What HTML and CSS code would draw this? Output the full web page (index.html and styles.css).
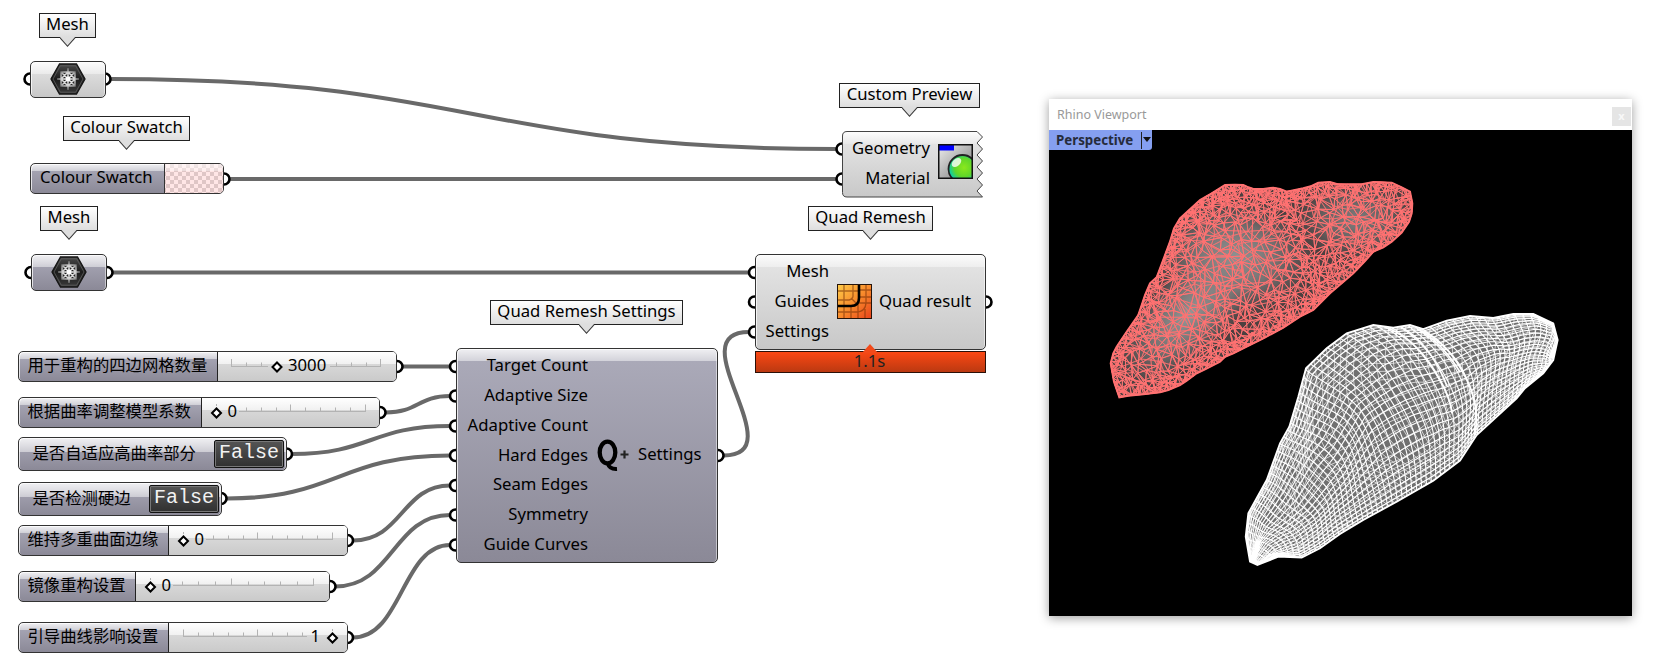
FILE: index.html
```html
<!DOCTYPE html>
<html lang="zh-CN">
<head>
<meta charset="utf-8">
<title>Quad Remesh</title>
<link rel="stylesheet" href="styles.css">
</head>
<body>
<svg class="defs" width="0" height="0" aria-hidden="true">
  <defs>
    <linearGradient id="hexFill" x1="0" y1="0" x2="0" y2="1"><stop offset="0" stop-color="#4a4a4a"/><stop offset=".5" stop-color="#1c1c1c"/><stop offset="1" stop-color="#3a3a3a"/></linearGradient>
    <radialGradient id="hexGlow" gradientUnits="userSpaceOnUse" cx="18" cy="16" r="13"><stop offset="0" stop-color="#fff"/><stop offset=".5" stop-color="#d0d0d0"/><stop offset="1" stop-color="#3c3c3c"/></radialGradient>
    <symbol id="meshIcon" viewBox="0 0 36 32">
      <path d="M9.500 1H26.500L35 16L26.500 31H9.500L1 16Z" fill="url(#hexFill)" stroke="#151515" stroke-width="1.300"/>
      <path d="M10.300 2.800H25.700L33 16L25.700 29.200H10.300L3 16Z" fill="none" stroke="#666" stroke-width=".7"/>
      <path d="M18 5V27M7 16H29M11 9L25 23M25 9L11 23M11 9H25V23H11ZM18 9L25 16L18 23L11 16Z" fill="none" stroke="url(#hexGlow)" stroke-width="1.500"/>
      <circle cx="18" cy="16" r="2.400" fill="#fff"/>
    </symbol>
  </defs>
</svg>
<main class="canvas">
  <svg class="wires" width="1040" height="669" viewBox="0 0 1040 669">
    <g class="wire">
      <path d="M111 79C473 79 473 149 836 149"/>
      <path d="M230 179H836"/>
      <path d="M113 272.500H749"/>
      <path d="M403 366.500H450"/>
      <path d="M386 412.500C418 412.500 418 396 450 396"/>
      <path d="M292 454C371 454 371 426 450 426"/>
      <path d="M227 498.500C338 498.500 338 455.500 450 455.500"/>
      <path d="M353 540.500C402 540.500 402 485.500 450 485.500"/>
      <path d="M335 586.500C393 586.500 393 515 450 515"/>
      <path d="M353 637.500C402 637.500 402 545 450 545"/>
      <path d="M724 455.500C795 455.500 677 332 749 332"/>
    </g>
    <g class="port">
      <circle cx="30" cy="79" r="5.500"/><circle cx="105" cy="79" r="5.500"/><circle cx="224" cy="179" r="5.500"/>
      <circle cx="31" cy="272.500" r="5.500"/><circle cx="107" cy="272.500" r="5.500"/>
      <circle cx="842" cy="149" r="5.500"/><circle cx="842" cy="179" r="5.500"/>
      <circle cx="754.500" cy="272.500" r="5.500"/><circle cx="754.500" cy="302" r="5.500"/><circle cx="754.500" cy="332" r="5.500"/><circle cx="986" cy="302" r="5.500"/>
      <circle cx="397" cy="366.500" r="5.500"/><circle cx="380" cy="412.500" r="5.500"/><circle cx="286.500" cy="454" r="5.500"/><circle cx="221" cy="498.500" r="5.500"/>
      <circle cx="347.500" cy="540.500" r="5.500"/><circle cx="330" cy="586.500" r="5.500"/><circle cx="347.500" cy="637.500" r="5.500"/>
      <circle cx="455.500" cy="366.500" r="5.500"/><circle cx="455.500" cy="396" r="5.500"/><circle cx="455.500" cy="426" r="5.500"/><circle cx="455.500" cy="455.500" r="5.500"/>
      <circle cx="455.500" cy="485.500" r="5.500"/><circle cx="455.500" cy="515" r="5.500"/><circle cx="455.500" cy="545" r="5.500"/><circle cx="718" cy="455.500" r="5.500"/>
    </g>
  </svg>

  <div class="balloon b-mesh1">Mesh</div>
  <div class="balloon b-swatch">Colour Swatch</div>
  <div class="balloon b-mesh2">Mesh</div>
  <div class="balloon b-preview">Custom Preview</div>
  <div class="balloon b-remesh">Quad Remesh</div>
  <div class="balloon b-settings">Quad Remesh Settings</div>

  <div class="node light n-mesh1"><svg width="36" height="32"><use href="#meshIcon"/></svg></div>
  <div class="node n-mesh2"><svg width="36" height="32"><use href="#meshIcon"/></svg></div>
  <div class="node n-swatch"><span class="swatch-name">Colour Swatch</span><span class="swatch-color"></span></div>

  <section class="n-preview">
    <svg class="torn" width="142" height="68" viewBox="0 0 142 68">
      <defs><linearGradient id="torn" x1="0" y1="0" x2="0" y2="1"><stop offset="0" stop-color="#fdfdfd"/><stop offset=".18" stop-color="#eaeaea"/><stop offset=".2" stop-color="#e2e2e2"/><stop offset="1" stop-color="#c8c8c8"/></linearGradient></defs>
      <path d="M5 .5H135L140.500 6L135 12L140.500 18L135 24L140.500 30L135 36L140.500 42L135 48L140.500 54L135 60L140.500 66H5Q.5 66 .5 61.500V5Q.5 .5 5 .5Z" fill="url(#torn)" stroke="#444"/>
    </svg>
    <div class="torn-body">
      <div class="params"><span>Geometry</span><span>Material</span></div>
      <svg width="35" height="35" viewBox="0 0 35 35">
        <defs>
          <linearGradient id="pvBg" x1="0" y1="0" x2="1" y2="1"><stop offset="0" stop-color="#eee"/><stop offset="1" stop-color="#777"/></linearGradient>
          <radialGradient id="ball" cx=".55" cy=".45" r=".6"><stop offset="0" stop-color="#8be81c"/><stop offset=".55" stop-color="#5fd62a"/><stop offset=".85" stop-color="#16cf9a"/><stop offset="1" stop-color="#1ab0d0"/></radialGradient>
          <clipPath id="pvClip"><rect x="1" y="1" width="33" height="33"/></clipPath>
        </defs>
        <rect x=".5" y=".5" width="34" height="34" fill="url(#pvBg)" stroke="#111"/>
        <rect x="1" y="1" width="15" height="5.500" fill="#00f"/>
        <g clip-path="url(#pvClip)"><circle cx="24.500" cy="25" r="14" fill="url(#ball)" stroke="#222" stroke-width="1.800"/><ellipse cx="18.500" cy="18.500" rx="5.500" ry="3.500" fill="#fff" opacity=".8" transform="rotate(-40 18.500 18.500)"/></g>
        <rect x=".75" y=".75" width="33.500" height="33.500" fill="none" stroke="#111" stroke-width="1.500"/>
      </svg>
    </div>
  </section>

  <section class="node light n-remesh">
    <div class="params"><span>Mesh</span><span>Guides</span><span>Settings</span></div>
    <svg width="35" height="35" viewBox="0 0 35 35">
      <defs><linearGradient id="rmBg" x1="0" y1="0" x2="1" y2="1"><stop offset="0" stop-color="#ffcf4a"/><stop offset=".5" stop-color="#f88b2c"/><stop offset="1" stop-color="#e8401a"/></linearGradient></defs>
      <rect width="35" height="35" fill="url(#rmBg)"/>
      <path d="M7 1V34M16 1V12Q16 15 12 16H1M1 7H23M29 1V18Q29 28 19 28H1M14 14L20 20M23 6H34M23 13H34M21 19H34M14 22V34M21 20V34M28 25V34" fill="none" stroke="#7a3206" stroke-width="1.300" opacity=".6"/>
      <path d="M22 0V14Q22 22 14 22H0" fill="none" stroke="#000" stroke-width="2.600"/>
      <rect x=".5" y=".5" width="34" height="34" fill="none" stroke="#26140a"/>
    </svg>
    <span class="out">Quad result</span>
  </section>
  <div class="timing">1.1s</div>

  <section class="node n-settings">
    <div class="params"><span>Target Count</span><span>Adaptive Size</span><span>Adaptive Count</span><span>Hard Edges</span><span>Seam Edges</span><span>Symmetry</span><span>Guide Curves</span></div>
    <svg width="33" height="34" viewBox="0 0 33 34">
      <ellipse cx="10.500" cy="13.500" rx="7.800" ry="10.800" fill="none" stroke="#000" stroke-width="4.300"/>
      <path d="M10.500 24Q12.500 30.500 20 30" fill="none" stroke="#000" stroke-width="4"/>
      <path d="M27.500 11.500V19.500M23.500 15.500H31.500" stroke="#222" stroke-width="2.200"/>
    </svg>
    <span class="out">Settings</span>
  </section>

  <div class="node slider s1"><span class="name">用于重构的四边网格数量</span>
    <svg width="178" height="29"><path class="track" d="M13.500 15V7M28.500 15V10.500M43.500 15V10.500M118.500 15V10.500M133.500 15V10.500M148.500 15V10.500M162.500 15V7M13 14.500H50M112 14.500H163"/><path class="grip" d="M59 10.500L63.500 15L59 19.500L54.500 15Z"/><text x="70" y="19">3000</text></svg></div>
  <div class="node slider s2"><span class="name">根据曲率调整模型系数</span>
    <svg width="177" height="29"><path class="track" d="M14.500 8V6M44.500 14V9.500M59.500 14V9.500M74.500 14V9.500M88.500 14V6.500M103.500 14V9.500M118.500 14V9.500M133.500 14V9.500M148.500 14V9.500M163.500 14V6.500M37 13.500H164"/><path class="grip" d="M14.500 10.500L19 15L14.500 19.500L10 15Z"/><text x="25.500" y="19">0</text></svg></div>
  <div class="node toggle t1"><span>是否自适应高曲率部分</span><b>False</b></div>
  <div class="node toggle t2"><span>是否检测硬边</span><b>False</b></div>
  <div class="node slider s3"><span class="name">维持多重曲面边缘</span>
    <svg width="178" height="29"><path class="track" d="M14.500 8V6M44.500 14V9.500M59.500 14V9.500M74.500 14V9.500M88.500 14V6.500M103.500 14V9.500M118.500 14V9.500M133.500 14V9.500M148.500 14V9.500M163.500 14V6.500M37 13.500H164"/><path class="grip" d="M14.500 10.500L19 15L14.500 19.500L10 15Z"/><text x="25.500" y="19">0</text></svg></div>
  <div class="node slider s4"><span class="name">镜像重构设置</span>
    <svg width="193" height="29"><path class="track" d="M14.500 8V6M46.500 14V9.500M62.500 14V9.500M79.500 14V9.500M95.500 14V6.500M112.500 14V9.500M128.500 14V9.500M144.500 14V9.500M161.500 14V9.500M177.500 14V6.500M37 13.500H178"/><path class="grip" d="M14.500 10.500L19 15L14.500 19.500L10 15Z"/><text x="25.500" y="19">0</text></svg></div>
  <div class="node slider s5"><span class="name">引导曲线影响设置</span>
    <svg width="178" height="29"><path class="track" d="M14.500 14V6.500M29.500 14V9.500M44.500 14V9.500M59.500 14V9.500M74.500 14V9.500M88.500 14V6.500M103.500 14V9.500M118.500 14V9.500M133.500 14V9.500M163.500 8V6M14 13.500H138"/><path class="grip" d="M163.500 10.500L168 15L163.500 19.500L159 15Z"/><text x="141.500" y="19">1</text></svg></div>
</main>

<section class="viewport">
  <header class="titlebar"><span>Rhino Viewport</span><span class="close">x</span></header>
  <div class="scene">
    <div class="view-tab"><span>Perspective</span><i></i></div>
    <svg class="model" width="583" height="486" viewBox="1049 130 583 486">
      <defs>
        <radialGradient id="s1"><stop offset="0" stop-color="#999c9c" stop-opacity=".95"/><stop offset=".5" stop-color="#8a8888" stop-opacity=".7"/><stop offset="1" stop-color="#777" stop-opacity="0"/></radialGradient>
        <clipPath id="clipA"><path id="outA"/></clipPath>
        <clipPath id="clipB"><path id="outB"/></clipPath>
      </defs>
      <g clip-path="url(#clipA)">
        <rect x="1100" y="170" width="330" height="240" fill="#4c4040"/>
        <ellipse cx="1235" cy="258" rx="80" ry="58" fill="url(#s1)"/>
        <ellipse cx="1188" cy="315" rx="90" ry="42" fill="url(#s1)" transform="rotate(-45 1188 315)"/>
        <ellipse cx="1355" cy="220" rx="60" ry="38" fill="url(#s1)" opacity=".7"/>
      </g>
      <g class="red"><path id="redBack"/><path id="redFront"/><path id="redRim"/></g>
      <path id="fillB" fill="#707070"/>
      <g class="white" clip-path="url(#clipB)"><path id="gridBack"/><path id="gridFront"/>
        <path class="ridge" d="M1388 328Q1420 342 1440 380Q1450 397 1452 413M1401 327Q1430 343 1447 386M1424 331Q1450 345 1467 380Q1480 407 1475 435M1417 329Q1440 340 1460 372"/>
      </g>
      <path id="rimB"/>
    </svg>
  </div>
</section>
<script src="mesh.js"></script>
</body>
</html>
```

FILE: styles.css
```css
* { box-sizing: border-box; }
body { margin: 0; width: 1662px; height: 669px; overflow: hidden; position: relative; background: #fff; color: #000; font-family: "Noto Sans", "Noto Sans CJK SC", sans-serif; font-size: 16.700px; }
.defs { position: absolute; }
.canvas { position: absolute; left: 0; top: 0; width: 1040px; height: 669px; }
.wires { position: absolute; left: 0; top: 0; }
.wire path { fill: none; stroke: #696969; stroke-width: 4; }
.port circle { fill: #fff; stroke: #000; stroke-width: 2.600; }

.balloon { position: absolute; height: 25px; border: 1px solid #222; background: linear-gradient(#fff, #dedede); display: flex; align-items: center; justify-content: center; padding-bottom: 5px; white-space: nowrap; }
.balloon::before, .balloon::after { content: ""; position: absolute; left: 50%; width: 16px; height: 9px; margin-left: -8px; bottom: -10px; background: #333; clip-path: polygon(0 0, 100% 0, 50% 100%); }
.balloon::after { bottom: -8.500px; background: #dedede; }
.b-mesh1 { left: 39px; top: 13px; width: 57px; }
.b-swatch { left: 63px; top: 116px; width: 127px; }
.b-mesh2 { left: 40px; top: 206px; width: 58px; }
.b-preview { left: 839px; top: 83px; width: 141px; }
.b-remesh { left: 808px; top: 206px; width: 125px; }
.b-settings { left: 490px; top: 300px; width: 193px; }

.node { position: absolute; display: flex; border: 1px solid #333; border-radius: 5px; background: linear-gradient(rgba(255,255,255,.82), rgba(255,255,255,.48)) 0 0 / 100% 12px no-repeat, linear-gradient(#acabba, #8b8997); box-shadow: inset 1px 1px 0 rgba(255,255,255,.75), inset -1px 0 0 rgba(255,255,255,.5); }
.node.light { background: linear-gradient(rgba(255,255,255,.85), rgba(255,255,255,.4)) 0 0 / 100% 12px no-repeat, linear-gradient(#e6e6e6, #c8c8c8); }
.n-mesh1, .n-mesh2 { width: 76px; height: 37px; align-items: center; justify-content: center; padding-bottom: 1px; }
.n-mesh1 { left: 30px; top: 61px; }
.n-mesh2 { left: 31px; top: 254px; }
.n-swatch { left: 30px; top: 163px; width: 194px; height: 31px; background-size: 100% 7px, auto; overflow: hidden; }
.swatch-name { width: 134px; border-right: 1px solid #333; padding-left: 9px; line-height: 26px; white-space: nowrap; }
.swatch-color { flex: 1; background: linear-gradient(rgba(255,255,255,.6), rgba(255,255,255,.35)) 0 0 / 100% 7px no-repeat, repeating-conic-gradient(#dfc6c6 0 25%, #ffe6e6 0 50%) 1px 0 / 8px 8px; }

.params { display: flex; flex-direction: column; align-items: flex-end; }
.params span { height: 29.750px; line-height: 27px; white-space: nowrap; }
.n-preview { position: absolute; left: 842px; top: 131px; width: 142px; height: 68px; }
.torn { position: absolute; left: 0; top: 0; }
.torn-body { position: relative; display: flex; gap: 8px; padding-top: 3px; }
.torn-body .params { width: 88px; }
.torn-body svg { margin-top: 10px; }
.n-remesh { left: 755px; top: 254px; width: 231px; height: 96px; align-items: center; }
.n-remesh .params { width: 73px; margin-right: 8px; }
.n-remesh svg { margin-bottom: 1px; }
.n-remesh .out { margin-left: 7px; padding-bottom: 3px; }
.timing { position: absolute; left: 755px; top: 351px; width: 231px; height: 22px; border: 1px solid #2b1008; background: linear-gradient(#fb4814, #bb3911); color: #222; text-align: center; line-height: 17px; padding-right: 2px; }
.timing::before { content: ""; position: absolute; left: 106px; top: -8px; width: 16px; height: 9px; background: #f24a1a; clip-path: polygon(50% 0, 100% 100%, 0 100%); }
.n-settings { left: 456px; top: 348px; width: 262px; height: 215px; align-items: center; }
.n-settings .params { width: 131px; margin-right: 9px; }
.n-settings .out { margin-left: 8px; padding-bottom: 4px; }

.slider { left: 18px; height: 31px; overflow: hidden; background-size: 100% 7px, auto; font-size: 16.350px; }
.name { border-right: 1px solid #222; padding-left: 8.500px; flex: 1; line-height: 25px; white-space: nowrap; font-family: "Noto Sans CJK SC", sans-serif; font-weight: 400; }
.slider svg { flex: none; background: linear-gradient(#fff, #f1f1f1) 0 0 / 100% 12px no-repeat, linear-gradient(#e2e2e2, #cacaca); }
.slider text { font-family: "Noto Sans", sans-serif; font-size: 16.700px; }
.track { fill: none; stroke: #b3b3b3; stroke-width: 1; }
.grip { fill: #fff; stroke: #000; stroke-width: 2; }
.s1 { top: 351px; width: 379px; }
.s2 { top: 397px; width: 362px; }
.s3 { top: 525px; width: 330px; }
.s4 { top: 571px; width: 312px; }
.s5 { top: 622px; width: 330px; }

.toggle { left: 18px; height: 34px; padding: 2px 2px 2px 13.500px; justify-content: space-between; font-family: "Noto Sans CJK SC", sans-serif; font-size: 16.350px; background-size: 100% 14px, auto; }
.toggle span { line-height: 25px; font-weight: 400; white-space: nowrap; }
.toggle b { width: 70px; height: 28px; border: 1.500px solid #111; border-radius: 2px; box-shadow: inset 0 0 0 1px #777; background: linear-gradient(#555, #303030); color: #f2f2f2; text-align: center; font: 20px/23px "Liberation Mono", monospace; }
.t1 { top: 437px; width: 269px; }
.t2 { top: 482px; width: 204px; }

.viewport { position: absolute; left: 1049px; top: 99px; width: 583px; height: 517px; background: #fff; box-shadow: 0 2px 10px rgba(0,0,0,.38); display: flex; flex-direction: column; }
.titlebar { height: 31px; display: flex; justify-content: space-between; padding: 0 1px 0 8px; font-size: 12.500px; line-height: 31px; color: #999; }
.close { width: 19px; height: 19px; margin-top: 8px; background: #e5e5e5; color: #f8f8f8; text-align: center; line-height: 17px; font-weight: 700; font-size: 11px; }
.scene { position: relative; height: 486px; background: #000; }
.view-tab { position: absolute; z-index: 1; left: 0; top: 0; width: 103px; height: 20px; padding-left: 7px; display: flex; background: #859ff0; color: #262c3c; font-size: 13.300px; font-weight: 700; line-height: 20px; border-bottom-right-radius: 3px; }
.view-tab span { width: 85px; }
.view-tab i { border-left: 1px solid #222; margin: 2px 0 1px; padding: 5px 0 0 1px; }
.view-tab i::after { content: ""; display: block; border: 4px solid transparent; border-top: 5px solid #111; border-bottom: 0; }
.model { display: block; }
.red path { fill: none; stroke: #ff7272; stroke-width: .95; }
.red #redBack { stroke-width: .75; opacity: .85; }
.red #redRim { stroke-width: 2; }
.white path { fill: none; stroke: #fff; stroke-width: 1.100; }
.white #gridBack { stroke-width: .75; opacity: .9; }
.white .ridge { stroke-width: 1.800; }
#rimB { fill: none; stroke: #fff; stroke-width: 1.800; }
```

FILE: mesh.js
```js
// Silhouettes are two chains running from the lower-left tip to the right tip.
const chain = (ox, oy, s) => s.split(' ').map(p => { const [x, y] = p.split(','); return [ox + x / 3, oy + y / 3]; });
const upA = chain(1090, 160, '88,712 72,665 62,610 70,580 80,560 110,515 145,465 155,435 165,405 180,370 200,352 225,285 240,245 252,205 270,175 330,120 365,100 405,75 435,74 460,75 475,82 490,87 520,87 550,83 570,87 590,95 640,85 665,78 685,68 720,66 740,72 770,73 815,73 850,66 905,68 935,82 960,95 967,130 965,160 957,185');
const loA = chain(1090, 160, '88,712 115,707 160,703 210,697 235,690 270,675 290,662 320,640 345,628 390,605 405,590 430,580 470,560 520,535 580,503 630,470 670,450 690,430 720,400 790,340 825,303 850,275 880,262 905,245 935,218 957,185');
const upB = chain(1230, 290, '82,825 60,815 47,740 55,670 110,570 150,460 178,410 205,320 228,235 290,175 350,130 430,105 490,113 540,105 580,117 650,92 720,78 790,84 850,72 910,72 970,100 983,150 970,210');
const loB = chain(1230, 290, '82,825 145,800 215,803 270,775 330,732 400,690 500,635 610,572 690,512 740,435 860,325 885,295 940,250 970,210');

let seed = 7;
const rnd = () => (seed = (seed * 16807) % 2147483647) / 2147483647;
const f = p => p[0].toFixed(1) + ' ' + p[1].toFixed(1);
const line = ps => 'M' + ps.map(f).join('L');
const set = (id, d) => document.getElementById(id).setAttribute('d', d);

function resample(c, n) {
  const acc = [0];
  for (let i = 1; i < c.length; i++) acc.push(acc[i - 1] + Math.hypot(c[i][0] - c[i - 1][0], c[i][1] - c[i - 1][1]));
  const out = [];
  for (let k = 0, i = 1; k <= n; k++) {
    const d = acc[acc.length - 1] * k / n;
    while (i < c.length - 1 && acc[i] < d) i++;
    const t = (d - acc[i - 1]) / (acc[i] - acc[i - 1]);
    out.push([c[i - 1][0] + (c[i][0] - c[i - 1][0]) * t, c[i - 1][1] + (c[i][1] - c[i - 1][1]) * t]);
  }
  return out;
}
function inside(poly, x, y) {
  let r = false;
  for (let i = 0, j = poly.length - 1; i < poly.length; j = i++) {
    const [a, b] = poly[i], [c, d] = poly[j];
    if ((b > y) !== (d > y) && x < (c - a) * (y - b) / (d - b) + a) r = !r;
  }
  return r;
}
function circum(a, b, c) {
  const d = 2 * (a[0] * (b[1] - c[1]) + b[0] * (c[1] - a[1]) + c[0] * (a[1] - b[1])) || 1e-9;
  const q = p => p[0] * p[0] + p[1] * p[1];
  const x = (q(a) * (b[1] - c[1]) + q(b) * (c[1] - a[1]) + q(c) * (a[1] - b[1])) / d;
  const y = (q(a) * (c[0] - b[0]) + q(b) * (a[0] - c[0]) + q(c) * (b[0] - a[0])) / d;
  return [x, y, (a[0] - x) ** 2 + (a[1] - y) ** 2];
}
function delaunay(pts) {
  const n = pts.length, P = pts.concat([[-3000, -3000], [6000, -3000], [1200, 8000]]);
  const mk = (a, b, c) => ({ v: [a, b, c], o: circum(P[a], P[b], P[c]) });
  let T = [mk(n, n + 1, n + 2)];
  for (let i = 0; i < n; i++) {
    const edges = new Map(), keep = [];
    for (const t of T) {
      if ((P[i][0] - t.o[0]) ** 2 + (P[i][1] - t.o[1]) ** 2 < t.o[2]) {
        for (let k = 0; k < 3; k++) {
          const a = t.v[k], b = t.v[(k + 1) % 3], key = Math.min(a, b) + '_' + Math.max(a, b);
          if (edges.has(key)) edges.delete(key); else edges.set(key, [a, b]);
        }
      } else keep.push(t);
    }
    for (const [a, b] of edges.values()) keep.push(mk(a, b, i));
    T = keep;
  }
  return T.map(t => t.v).filter(v => Math.max(...v) < n);
}
// Points are thinned by local spacing, then joined; jitter makes long, uneven facets.
function triMesh(poly, rim, spacing, jitter) {
  const pts = resample(poly.concat([poly[0]]), rim).slice(0, -1).map(p => [p[0] + rnd() * .1, p[1] + rnd() * .1]);
  for (let k = 0; k < 8000; k++) {
    const x = 1105 + rnd() * 310, y = 178 + rnd() * 224;
    if (!inside(poly, x, y)) continue;
    const r = spacing(x, y);
    if (pts.every(p => Math.hypot(p[0] - x, p[1] - y) > r)) pts.push([x, y]);
  }
  const tris = delaunay(pts);
  const moved = pts.map(([x, y], i) => {
    if (i < rim) return [x, y];
    const nx = x + (rnd() - .5) * jitter, ny = y + (rnd() - .5) * jitter;
    return inside(poly, nx, ny) ? [nx, ny] : [x, y];
  });
  let d = '';
  for (const [a, b, c] of tris) {
    const A = pts[a], B = pts[b], C = pts[c];
    if (inside(poly, (A[0] + B[0] + C[0]) / 3, (A[1] + B[1] + C[1]) / 3)) d += line([moved[a], moved[b], moved[c]]) + 'Z';
  }
  return d;
}
const polyA = upA.concat(loA.slice(1, -1).reverse());
const polyB = upB.concat(loB.slice(1, -1).reverse());
const rimPts = resample(polyA.concat([polyA[0]]), 90);
const edgeDist = (x, y) => Math.min(...rimPts.map(p => Math.hypot(p[0] - x, p[1] - y)));
set('outA', line(polyA) + 'Z');
set('redRim', line(polyA) + 'Z');
set('redFront', triMesh(polyA, 200, (x, y) => {
  const crease = Math.abs(x - 1285 - (y - 210) * .4);
  const top = y < 225 && x < 1300 ? .65 : 1;
  return Math.min(11, 2.6 + edgeDist(x, y) * .2, 3.5 + crease * .3) * top * (.6 + rnd() * .8);
}, 5));
set('redBack', triMesh(polyA, 130, (x, y) => Math.min(17, 3 + edgeDist(x, y) * .38) * (.5 + rnd()), 12));

// Quad grid: ribs across the body and bands along it, squeezed towards the rim.
function grid(ribs, bands, bulge, skew, amp) {
  const U = resample(upB, ribs), L = resample(loB, ribs), rows = [];
  for (let i = 0; i <= ribs; i++) {
    const row = [];
    for (let j = 0; j <= bands; j++) {
      const s = j / bands, t = s * .5 + (1 - Math.cos(Math.PI * s)) / 2 * .5;
      const w = Math.sin(Math.PI * t), k = bulge * w * Math.sin(Math.PI * i / ribs);
      const a = w * amp * Math.sin(i * .21 + j * .33 + skew), b = w * amp * Math.cos(i * .27 - j * .29 + skew);
      row.push([U[i][0] + (L[i][0] - U[i][0]) * t + k + a, U[i][1] + (L[i][1] - U[i][1]) * t - k * .75 + b]);
    }
    rows.push(row);
  }
  let d = rows.map(line).join('');
  for (let j = 0; j <= bands; j++) d += line(rows.map(r => r[j]));
  return d;
}
set('outB', line(polyB) + 'Z');
set('fillB', line(polyB) + 'Z');
set('rimB', line(polyB) + 'Z');
set('gridFront', grid(66, 25, 20, 0, 3));
set('gridBack', grid(60, 23, -24, 2, 6));
```
